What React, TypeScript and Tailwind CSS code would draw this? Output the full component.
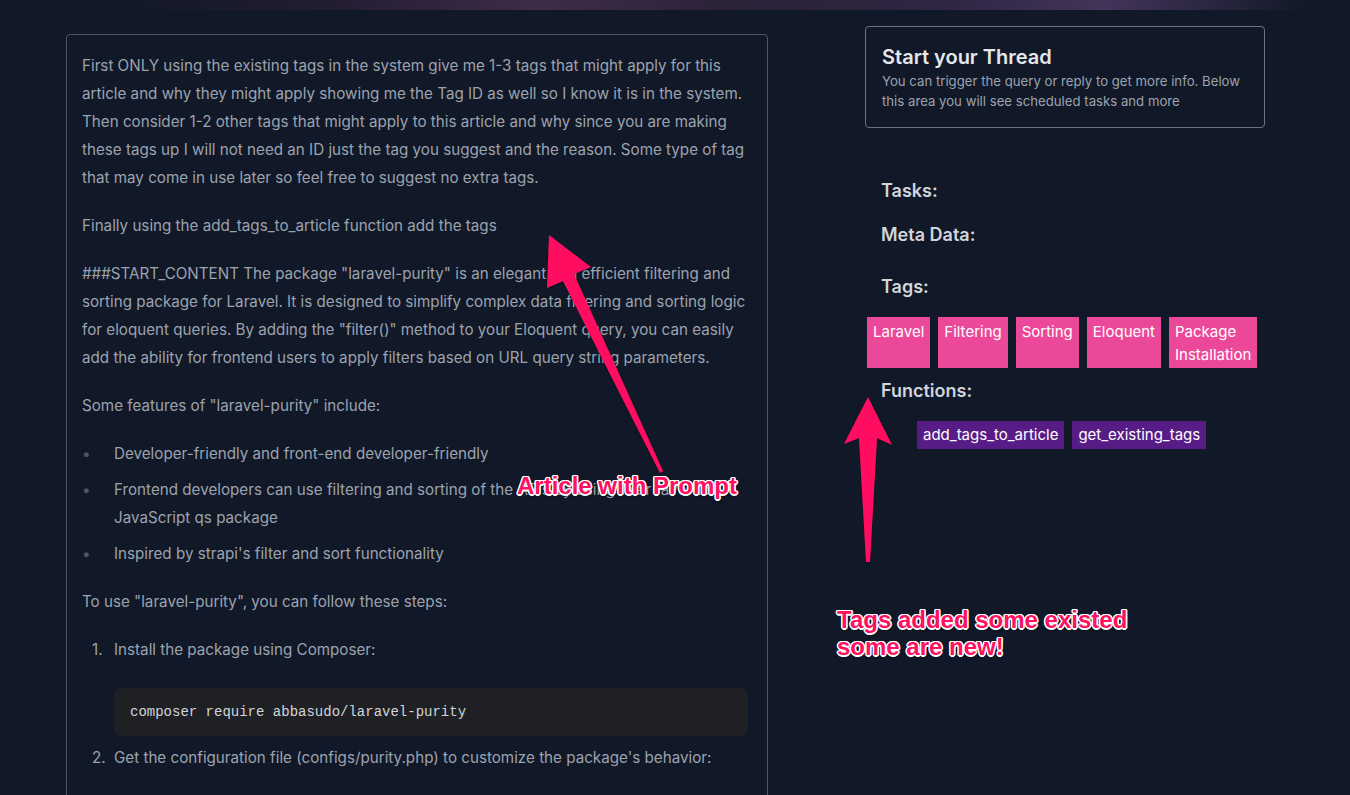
import React from "react";

const sans = { fontFamily: "Inter, 'Noto Sans', sans-serif" };

function Tag({ label }: { label: React.ReactNode }) {
  return <div className="bg-[#ec4899] text-white text-[15px] leading-[23px] px-1.5 pt-[3px] h-[51px]">{label}</div>;
}

function Fn({ label }: { label: string }) {
  return <div className="bg-[#581c87] text-white text-[15px] leading-[28px] px-1.5 h-[28px]">{label}</div>;
}

export default function App() {
  return <div className="relative min-h-screen bg-[#111827] overflow-hidden" style={sans}>
    <div className="h-[10px] bg-[linear-gradient(90deg,#111827_8%,#231d32_25%,#3f2c48_40%,#2a2237_55%,#2f2643_70%,#433459_82%,#111827_97%)]" />

    <div className="flex pl-[66px] gap-[97px]">
      {/* article */}
      <div className="mt-[24px] w-[702px] border border-[#4b5563] rounded pl-[15px] pr-[19px] pt-[17px] pb-10 text-[#9ca3af] text-[15.2px] leading-[28px] whitespace-nowrap">
        <p>First ONLY using the existing tags in the system give me 1-3 tags that might apply for this<br />
          article and why they might apply showing me the Tag ID as well so I know it is in the system.<br />
          Then consider 1-2 other tags that might apply to this article and why since you are making<br />
          these tags up I will not need an ID just the tag you suggest and the reason. Some type of tag<br />
          that may come in use later so feel free to suggest no extra tags.</p>
        <p className="mt-5">Finally using the add_tags_to_article function add the tags</p>
        <p className="mt-5">###START_CONTENT The package "laravel-purity" is an elegant and efficient filtering and<br />
          sorting package for Laravel. It is designed to simplify complex data filtering and sorting logic<br />
          for eloquent queries. By adding the "filter()" method to your Eloquent query, you can easily<br />
          add the ability for frontend users to apply filters based on URL query string parameters.</p>
        <p className="mt-5">Some features of "laravel-purity" include:</p>
        <ul className="mt-5 flex flex-col gap-2">
          {[
            <>Developer-friendly and front-end developer-friendly</>,
            <>Frontend developers can use filtering and sorting of the APIs by using their favorite<br />JavaScript qs package</>,
            <>Inspired by strapi's filter and sort functionality</>,
          ].map((t, i) => <li key={i} className="flex">
            <span className="w-8 shrink-0 text-[#4b5563]">•</span>
            <span>{t}</span>
          </li>)}
        </ul>
        <p className="mt-5">To use "laravel-purity", you can follow these steps:</p>
        <ol className="mt-5 flex flex-col">
          <li className="flex">
            <span className="w-8 shrink-0 pl-[10px]">1.</span>
            <div className="flex-1">
              <p>Install the package using Composer:</p>
              <pre className="mt-6 bg-[#1f2024] rounded-md px-4 py-3 text-[14px] leading-[24px] text-[#d1d5db]" style={{ fontFamily: "'Liberation Mono', monospace" }}>composer require abbasudo/laravel-purity</pre>
            </div>
          </li>
          <li className="flex mt-2">
            <span className="w-8 shrink-0 pl-[10px]">2.</span>
            <div className="flex-1">
              <p>Get the configuration file (configs/purity.php) to customize the package's behavior:</p>
              <pre className="mt-6 bg-[#1f2024] rounded-md px-4 py-3 text-[14px] leading-[24px] text-[#d1d5db]" style={{ fontFamily: "'Liberation Mono', monospace" }}>php artisan vendor:publish --tag=purity</pre>
            </div>
          </li>
        </ol>
      </div>

      {/* right column */}
      <div className="mt-[16px] w-[400px]">
        <div className="border border-[#6b7280] rounded px-4 pt-[16px] pb-[16px]">
          <h2 className="text-[20px] leading-[28px] font-semibold text-[#e5e7eb]">Start your Thread</h2>
          <p className="text-[13.2px] leading-[20px] text-[#9ca3af]">You can trigger the query or reply to get more info. Below this area you will see scheduled tasks and more</p>
        </div>

        <div className="px-4 mt-[49px] text-[#d1d5db] text-[18px] leading-[28px] font-semibold">
          <h3>Tasks:</h3>
          <h3 className="mt-4">Meta Data:</h3>
          <h3 className="mt-6">Tags:</h3>
        </div>
        <div className="flex gap-2 pl-[2px] mt-[16px]">
          <Tag label="Laravel" />
          <Tag label="Filtering" />
          <Tag label="Sorting" />
          <Tag label="Eloquent" />
          <Tag label={<>Package<br />Installation</>} />
        </div>
        <h3 className="px-4 mt-[9px] text-[#d1d5db] text-[18px] leading-[28px] font-semibold">Functions:</h3>
        <div className="flex gap-2 pl-[52px] mt-[16px]">
          <Fn label="add_tags_to_article" />
          <Fn label="get_existing_tags" />
        </div>
      </div>
    </div>

    {/* annotations */}
    <svg className="absolute inset-0 pointer-events-none" width="1350" height="795" viewBox="0 0 1350 795">
      <defs>
        <filter id="sh" x="-20%" y="-20%" width="140%" height="140%">
          <feDropShadow dx="0" dy="1" stdDeviation="1" floodColor="#000" floodOpacity="0.4" />
        </filter>
      </defs>
      <g fill="#ff1060" filter="url(#sh)">
        <polygon points="549,235 591,267 574,274 663,471 660,473 563,281 547,288" />
        <polygon points="868,397 892,445 877,438 870,562 866,562 859,438 844,444" />
      </g>
    </svg>
    <div className="absolute left-[517px] top-[471px] text-[24px] leading-[30px] font-bold text-[#ff1060] [text-shadow:1.5px_0_0_#fff,-1.5px_0_0_#fff,0_1.5px_0_#fff,0_-1.5px_0_#fff,1px_1px_0_#fff,-1px_-1px_0_#fff,1px_-1px_0_#fff,-1px_1px_0_#fff,0_2px_3px_rgba(0,0,0,0.5)]" style={{ fontFamily: "'Liberation Sans', Arial, sans-serif" }}>Article with Prompt</div>
    <div className="absolute left-[837px] top-[606px] text-[24px] leading-[27px] font-bold text-[#ff1060] [text-shadow:1.5px_0_0_#fff,-1.5px_0_0_#fff,0_1.5px_0_#fff,0_-1.5px_0_#fff,1px_1px_0_#fff,-1px_-1px_0_#fff,1px_-1px_0_#fff,-1px_1px_0_#fff,0_2px_3px_rgba(0,0,0,0.5)]" style={{ fontFamily: "'Liberation Sans', Arial, sans-serif" }}>Tags added some existed<br />some are new!</div>
  </div>
}
